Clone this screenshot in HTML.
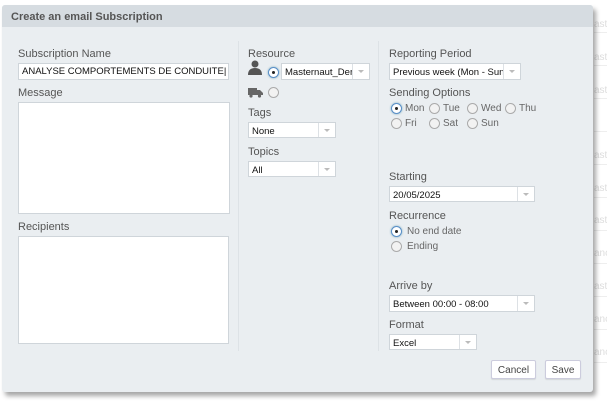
<!DOCTYPE html>
<html><head><style>
*{box-sizing:border-box;margin:0;padding:0}
body{width:607px;height:406px;background:#fff;font-family:"Liberation Sans",Arial,sans-serif;position:relative;overflow:hidden;color:#333}
.bg{position:absolute;left:594px;font-size:10px;color:#ddd}
.hl{position:absolute;left:594px;width:13px;height:1px;background:#eee}
.dlg{position:absolute;left:2px;top:5px;width:591px;height:387px;background:#eaeef1;border-radius:3px;box-shadow:3px 4px 5px rgba(0,0,0,.35)}
.title{position:absolute;left:0;top:0;width:591px;height:22px;background:#d6dce1;border-radius:3px 3px 0 0;font-size:11px;font-weight:bold;color:#555;padding:6px 0 0 9px}
.a{position:absolute}
.lbl{position:absolute;font-size:11px;color:#555}
.inp{position:absolute;background:#fff;border:1px solid #cfd5da;font-size:9.5px;color:#111;padding:3px 0 0 3px;white-space:nowrap;overflow:hidden}
.sel::after{content:"";position:absolute;right:0;top:0;width:16px;height:100%;border-left:1px solid #dde1e5}
.sel::before{content:"";position:absolute;right:5px;top:6px;border:3px solid transparent;border-top:3px solid #bbb}
.rad{position:absolute;width:11px;height:11px;border-radius:50%;border:1px solid #aaa;background:#f2f2f2}
.rad.on{border-color:#5a8fc8;background:#fff;box-shadow:0 0 2px #7ab}
.rad.on::after{content:"";position:absolute;left:3px;top:3px;width:3px;height:3px;border-radius:50%;background:#222}
.rl{position:absolute;font-size:10px;color:#666}
.div{position:absolute;top:36px;width:1px;height:310px;background:#dde2e6}
.btn{position:absolute;background:#fff;border:1px solid #ccd;border-radius:2px;font-size:10px;color:#444;text-align:center;padding-top:4px;box-shadow:0 1px 1px rgba(0,0,0,.1)}
</style></head><body>
<div class="hl" style="top:32px"></div><div class="hl" style="top:65px"></div><div class="hl" style="top:98px"></div><div class="hl" style="top:131px"></div><div class="hl" style="top:164px"></div><div class="hl" style="top:197px"></div><div class="hl" style="top:230px"></div><div class="hl" style="top:263px"></div><div class="hl" style="top:296px"></div><div class="hl" style="top:329px"></div><div class="hl" style="top:362px"></div>
<div class="bg" style="top:19px">aste</div><div class="bg" style="top:52px">aste</div><div class="bg" style="top:85px">aste</div><div class="bg" style="top:150px">aste</div><div class="bg" style="top:183px">aste</div><div class="bg" style="top:215px">aste</div><div class="bg" style="top:248px">anc</div><div class="bg" style="top:281px">aste</div><div class="bg" style="top:314px">anc</div><div class="bg" style="top:347px">anc</div>
<div class="dlg">
<div class="title">Create an email Subscription</div>
<div class="div" style="left:236px"></div><div class="div" style="left:376px"></div>
<div class="lbl" style="left:16px;top:43px">Subscription Name</div>
<div class="inp" style="left:16px;top:58px;width:211px;height:17px;font-size:9.5px;padding-top:2px">ANALYSE COMPORTEMENTS DE CONDUITE|</div>
<div class="lbl" style="left:16px;top:82px">Message</div>
<div class="inp" style="left:16px;top:97px;width:212px;height:112px"></div>
<div class="lbl" style="left:16px;top:216px">Recipients</div>
<div class="inp" style="left:16px;top:231px;width:211px;height:108px"></div>

<div class="lbl" style="left:246px;top:43px">Resource</div>
<svg class="a" style="left:246px;top:55px" width="14" height="15" viewBox="0 0 14 15"><circle cx="7" cy="4" r="3.5" fill="#555"/><path d="M0 15 Q0 8 7 8 Q14 8 14 15Z" fill="#555"/></svg>
<div class="rad on" style="left:266px;top:62px"></div>
<div class="inp sel" style="left:279px;top:58px;width:89px;height:17px">Masternaut_Der</div>
<svg class="a" style="left:246px;top:82px" width="15" height="11" viewBox="0 0 15 11"><rect x="0" y="1" width="9" height="7" fill="#666"/><path d="M9 3h3l3 3v2H9z" fill="#666"/><circle cx="3" cy="9" r="1.6" fill="#666"/><circle cx="11.5" cy="9" r="1.6" fill="#666"/></svg>
<div class="rad" style="left:266px;top:82px"></div>
<div class="lbl" style="left:246px;top:102px">Tags</div>
<div class="inp sel" style="left:246px;top:117px;width:88px;height:16px">None</div>
<div class="lbl" style="left:246px;top:141px">Topics</div>
<div class="inp sel" style="left:246px;top:156px;width:88px;height:16px">All</div>

<div class="lbl" style="left:387px;top:43px">Reporting Period</div>
<div class="inp sel" style="left:387px;top:58px;width:132px;height:17px">Previous week (Mon - Sun</div>
<div class="lbl" style="left:387px;top:82px">Sending Options</div>
<div class="rad on" style="left:389px;top:98px"></div><div class="rl" style="left:403px;top:98px">Mon</div>
<div class="rad" style="left:427px;top:98px"></div><div class="rl" style="left:441px;top:98px">Tue</div>
<div class="rad" style="left:465px;top:98px"></div><div class="rl" style="left:479px;top:98px">Wed</div>
<div class="rad" style="left:503px;top:98px"></div><div class="rl" style="left:517px;top:98px">Thu</div>
<div class="rad" style="left:389px;top:113px"></div><div class="rl" style="left:403px;top:113px">Fri</div>
<div class="rad" style="left:427px;top:113px"></div><div class="rl" style="left:441px;top:113px">Sat</div>
<div class="rad" style="left:465px;top:113px"></div><div class="rl" style="left:479px;top:113px">Sun</div>
<div class="lbl" style="left:387px;top:166px">Starting</div>
<div class="inp sel" style="left:387px;top:181px;width:146px;height:16px">20/05/2025</div>
<div class="lbl" style="left:387px;top:205px">Recurrence</div>
<div class="rad on" style="left:389px;top:221px"></div><div class="rl" style="left:405px;top:221px">No end date</div>
<div class="rad" style="left:389px;top:236px"></div><div class="rl" style="left:405px;top:236px">Ending</div>
<div class="lbl" style="left:387px;top:275px">Arrive by</div>
<div class="inp sel" style="left:387px;top:290px;width:146px;height:17px">Between 00:00 - 08:00</div>
<div class="lbl" style="left:387px;top:314px">Format</div>
<div class="inp sel" style="left:387px;top:329px;width:88px;height:16px">Excel</div>
<div class="btn" style="left:489px;top:355px;width:45px;height:19px">Cancel</div>
<div class="btn" style="left:543px;top:355px;width:36px;height:19px">Save</div>
</div>
</body></html>
